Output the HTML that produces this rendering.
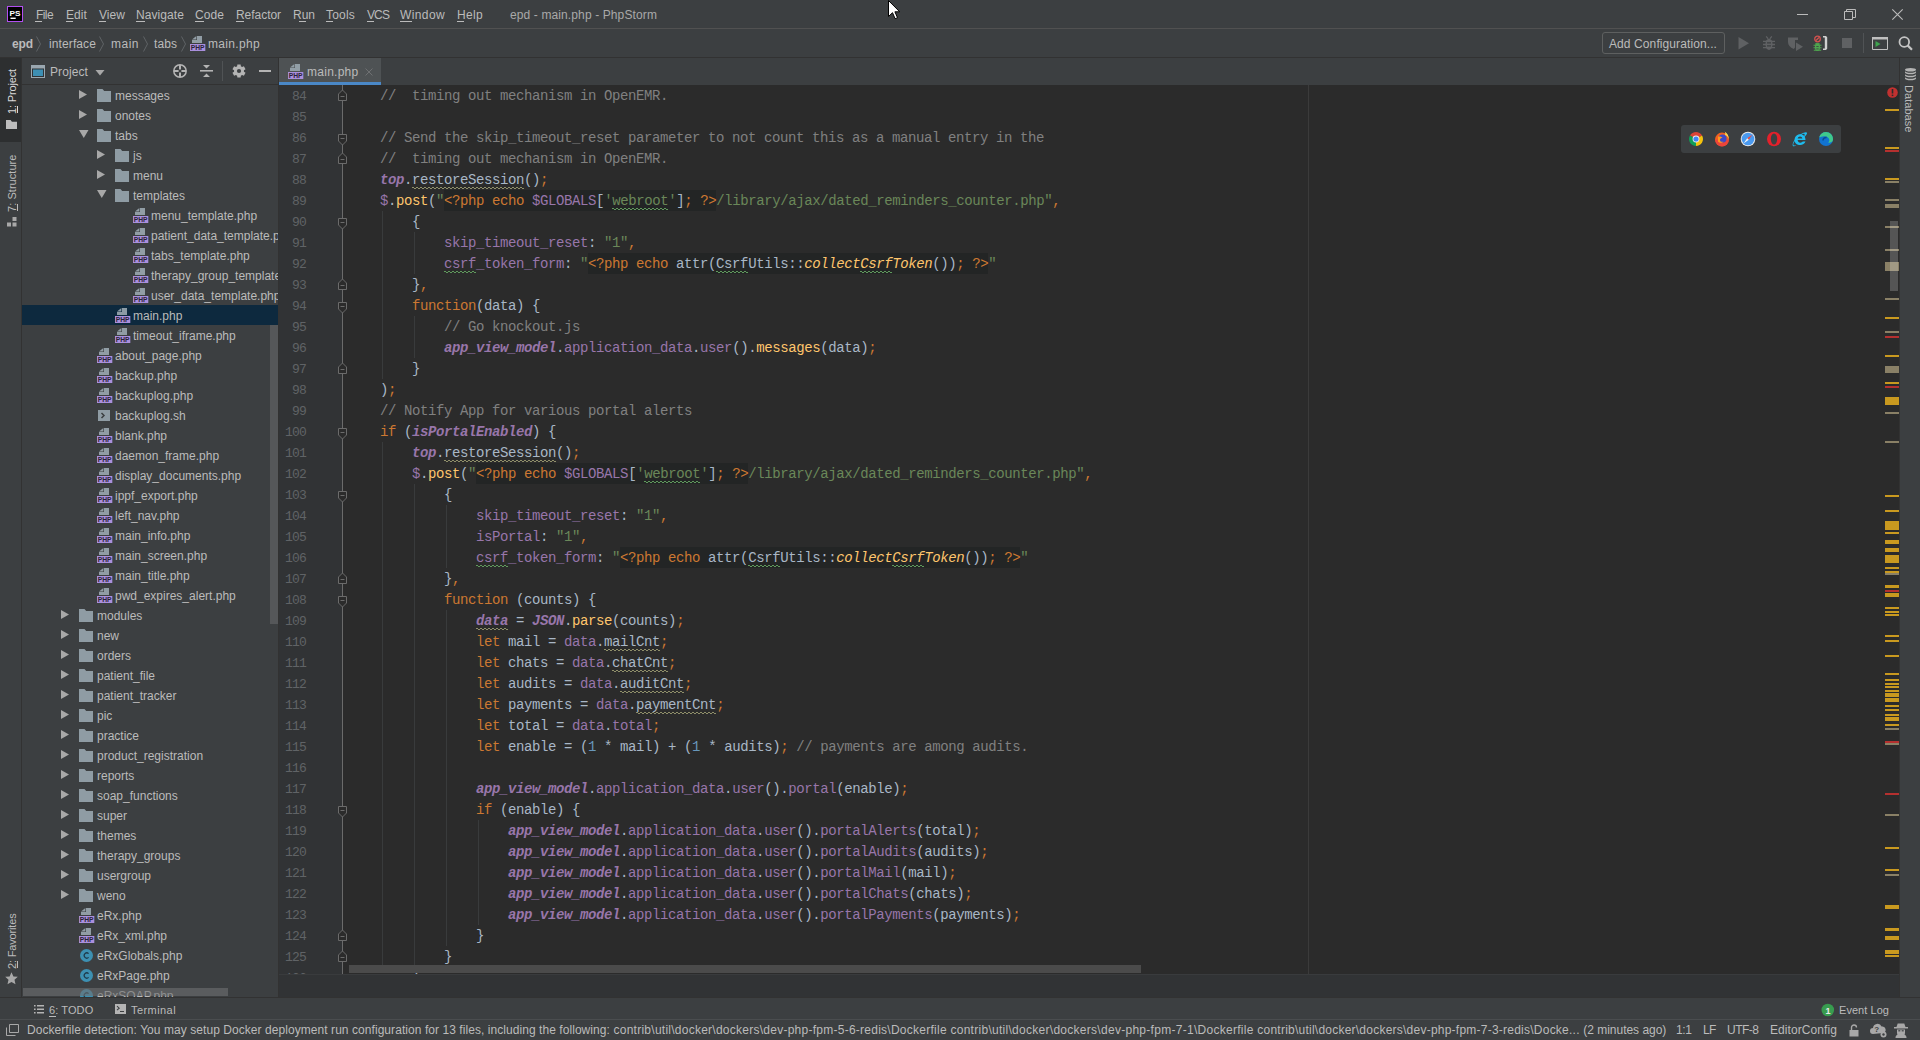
<!DOCTYPE html>
<html><head><meta charset="utf-8"><style>
*{margin:0;padding:0;box-sizing:border-box}
html,body{width:1920px;height:1040px;overflow:hidden;background:#3c3f41;font-family:"Liberation Sans",sans-serif;color:#bbbbbb;font-size:12px}
.a{position:absolute}
.ic{position:absolute;overflow:visible}
.tx{position:absolute;line-height:16px;white-space:nowrap}
.sel{position:absolute;left:22px;width:256px;height:20px;background:#0d293e}
#tree{position:absolute;left:22px;top:85px;width:256px;height:912px;overflow:hidden}
#tree .inner{position:absolute;left:-22px;top:-85px;width:1920px;height:1040px}
#editor{position:absolute;left:279px;top:85px;width:1620px;height:889px;background:#2b2b2b;overflow:hidden}
#editor .inner{position:absolute;left:-279px;top:-85px;width:1920px;height:1040px}
.gutter{position:absolute;left:279px;top:85px;width:64px;height:889px;background:#313335}
.num{position:absolute;left:279px;width:27px;text-align:right;font-family:"Liberation Mono",monospace;font-size:13px;letter-spacing:-0.8px;line-height:21px;color:#606366}
.ln{position:absolute;left:380px;font-family:"Liberation Mono",monospace;font-size:14px;letter-spacing:-0.4px;line-height:21px;color:#a9b7c6;white-space:pre}
.k{color:#cc7832} .s{color:#6a8759} .c{color:#808080} .p{color:#9876aa} .pi{color:#9876aa;font-style:italic;font-weight:bold}
.f{color:#ffc66d} .fi{color:#ffc66d;font-style:italic} .n{color:#6897bb}
.T{}
.tbg{position:absolute;height:21px;background:#232525}
.u,.ug,.sg,.pg,.fig,.piu{position:relative}
.u::after,.ug::after,.sg::after,.pg::after,.fig::after,.piu::after{content:"";position:absolute;left:0;right:0;top:14.5px;height:2px;background:repeating-linear-gradient(90deg,var(--wc) 0 2px,transparent 2px 4px) 0 0/100% 1px no-repeat,repeating-linear-gradient(90deg,transparent 0 2px,var(--wc) 2px 4px) 0 1px/100% 1px no-repeat}
.u{--wc:#8f8f6a}
.ug{--wc:#5f9a5c}
.sg{color:#6a8759;--wc:#5f9a5c}
.pg{color:#9876aa;--wc:#5f9a5c}
.fig{color:#ffc66d;font-style:italic;--wc:#5f9a5c}
.piu{color:#9876aa;font-style:italic;font-weight:bold;--wc:#8f8f6a}
.guide{position:absolute;width:1px;background:#393b3c}
.mk{position:absolute;left:1885px;width:14px}
.foldline{position:absolute;left:342px;top:85px;width:1px;height:889px;background:#6b6b6b}
</style></head><body>
<div class="a" style="left:0;top:28px;width:1920px;height:1px;background:#515151"></div>
<div class="a" style="left:0;top:57px;width:1920px;height:1px;background:#323232"></div>
<div class="a" style="left:0;top:58px;width:21px;height:84px;background:#2d2f30"></div>
<div class="a" style="left:21px;top:58px;width:1px;height:939px;background:#323232"></div>
<div class="a" style="left:1899px;top:58px;width:1px;height:939px;background:#323232"></div>
<div class="a" style="left:22px;top:84px;width:256px;height:1px;background:#323232"></div>
<div class="a" style="left:278px;top:58px;width:1px;height:939px;background:#323232"></div>
<div id="tree"><div class="inner"><svg class="ic" style="left:79px;top:90px" width="10" height="10" viewBox="0 0 10 10"><path d="M0 0v9l8-4.5z" fill="#a8a8a8"/></svg><svg class="ic" style="left:97px;top:89px" width="16" height="16" viewBox="0 0 16 16"><path d="M0 0h5.5l1.7 2H14v11H0z" fill="#8f9ca4"/></svg><div class="tx" style="left:115px;top:87.84px;font-size:12px;color:#bbbbbb;font-weight:normal;">messages</div><svg class="ic" style="left:79px;top:110px" width="10" height="10" viewBox="0 0 10 10"><path d="M0 0v9l8-4.5z" fill="#a8a8a8"/></svg><svg class="ic" style="left:97px;top:109px" width="16" height="16" viewBox="0 0 16 16"><path d="M0 0h5.5l1.7 2H14v11H0z" fill="#8f9ca4"/></svg><div class="tx" style="left:115px;top:107.84px;font-size:12px;color:#bbbbbb;font-weight:normal;">onotes</div><svg class="ic" style="left:79px;top:130px" width="10" height="10" viewBox="0 0 10 10"><path d="M0 0h9.5L4.75 8z" fill="#a8a8a8"/></svg><svg class="ic" style="left:97px;top:129px" width="16" height="16" viewBox="0 0 16 16"><path d="M0 0h5.5l1.7 2H14v11H0z" fill="#8f9ca4"/></svg><div class="tx" style="left:115px;top:127.84px;font-size:12px;color:#bbbbbb;font-weight:normal;">tabs</div><svg class="ic" style="left:97px;top:150px" width="10" height="10" viewBox="0 0 10 10"><path d="M0 0v9l8-4.5z" fill="#a8a8a8"/></svg><svg class="ic" style="left:115px;top:149px" width="16" height="16" viewBox="0 0 16 16"><path d="M0 0h5.5l1.7 2H14v11H0z" fill="#8f9ca4"/></svg><div class="tx" style="left:133px;top:147.84px;font-size:12px;color:#bbbbbb;font-weight:normal;">js</div><svg class="ic" style="left:97px;top:170px" width="10" height="10" viewBox="0 0 10 10"><path d="M0 0v9l8-4.5z" fill="#a8a8a8"/></svg><svg class="ic" style="left:115px;top:169px" width="16" height="16" viewBox="0 0 16 16"><path d="M0 0h5.5l1.7 2H14v11H0z" fill="#8f9ca4"/></svg><div class="tx" style="left:133px;top:167.84px;font-size:12px;color:#bbbbbb;font-weight:normal;">menu</div><svg class="ic" style="left:97px;top:190px" width="10" height="10" viewBox="0 0 10 10"><path d="M0 0h9.5L4.75 8z" fill="#a8a8a8"/></svg><svg class="ic" style="left:115px;top:189px" width="16" height="16" viewBox="0 0 16 16"><path d="M0 0h5.5l1.7 2H14v11H0z" fill="#8f9ca4"/></svg><div class="tx" style="left:133px;top:187.84px;font-size:12px;color:#bbbbbb;font-weight:normal;">templates</div><svg class="ic" style="left:133px;top:207px" width="16" height="16" viewBox="0 0 16 16"><path d="M7 1h5v7H2V5.1h5z" fill="#9aa7b0" fill-opacity="0.9"/><path d="M2 4.6L6.4 1v3.6z" fill="#9aa7b0" fill-opacity="0.9"/><rect x="0" y="9" width="15.3" height="7" fill="#a98fdc"/><text x="0.8" y="15.3" font-family="Liberation Sans" font-weight="bold" font-size="7.4" fill="#2a2238" textLength="13.8" lengthAdjust="spacingAndGlyphs">PHP</text></svg><div class="tx" style="left:151px;top:207.84px;font-size:12px;color:#bbbbbb;font-weight:normal;">menu_template.php</div><svg class="ic" style="left:133px;top:227px" width="16" height="16" viewBox="0 0 16 16"><path d="M7 1h5v7H2V5.1h5z" fill="#9aa7b0" fill-opacity="0.9"/><path d="M2 4.6L6.4 1v3.6z" fill="#9aa7b0" fill-opacity="0.9"/><rect x="0" y="9" width="15.3" height="7" fill="#a98fdc"/><text x="0.8" y="15.3" font-family="Liberation Sans" font-weight="bold" font-size="7.4" fill="#2a2238" textLength="13.8" lengthAdjust="spacingAndGlyphs">PHP</text></svg><div class="tx" style="left:151px;top:227.84px;font-size:12px;color:#bbbbbb;font-weight:normal;">patient_data_template.php</div><svg class="ic" style="left:133px;top:247px" width="16" height="16" viewBox="0 0 16 16"><path d="M7 1h5v7H2V5.1h5z" fill="#9aa7b0" fill-opacity="0.9"/><path d="M2 4.6L6.4 1v3.6z" fill="#9aa7b0" fill-opacity="0.9"/><rect x="0" y="9" width="15.3" height="7" fill="#a98fdc"/><text x="0.8" y="15.3" font-family="Liberation Sans" font-weight="bold" font-size="7.4" fill="#2a2238" textLength="13.8" lengthAdjust="spacingAndGlyphs">PHP</text></svg><div class="tx" style="left:151px;top:247.84px;font-size:12px;color:#bbbbbb;font-weight:normal;">tabs_template.php</div><svg class="ic" style="left:133px;top:267px" width="16" height="16" viewBox="0 0 16 16"><path d="M7 1h5v7H2V5.1h5z" fill="#9aa7b0" fill-opacity="0.9"/><path d="M2 4.6L6.4 1v3.6z" fill="#9aa7b0" fill-opacity="0.9"/><rect x="0" y="9" width="15.3" height="7" fill="#a98fdc"/><text x="0.8" y="15.3" font-family="Liberation Sans" font-weight="bold" font-size="7.4" fill="#2a2238" textLength="13.8" lengthAdjust="spacingAndGlyphs">PHP</text></svg><div class="tx" style="left:151px;top:267.84px;font-size:12px;color:#bbbbbb;font-weight:normal;">therapy_group_template.php</div><svg class="ic" style="left:133px;top:287px" width="16" height="16" viewBox="0 0 16 16"><path d="M7 1h5v7H2V5.1h5z" fill="#9aa7b0" fill-opacity="0.9"/><path d="M2 4.6L6.4 1v3.6z" fill="#9aa7b0" fill-opacity="0.9"/><rect x="0" y="9" width="15.3" height="7" fill="#a98fdc"/><text x="0.8" y="15.3" font-family="Liberation Sans" font-weight="bold" font-size="7.4" fill="#2a2238" textLength="13.8" lengthAdjust="spacingAndGlyphs">PHP</text></svg><div class="tx" style="left:151px;top:287.84px;font-size:12px;color:#bbbbbb;font-weight:normal;">user_data_template.php</div><div class="sel" style="top:305px"></div><svg class="ic" style="left:115px;top:307px" width="16" height="16" viewBox="0 0 16 16"><path d="M7 1h5v7H2V5.1h5z" fill="#9aa7b0" fill-opacity="0.9"/><path d="M2 4.6L6.4 1v3.6z" fill="#9aa7b0" fill-opacity="0.9"/><rect x="0" y="9" width="15.3" height="7" fill="#a98fdc"/><text x="0.8" y="15.3" font-family="Liberation Sans" font-weight="bold" font-size="7.4" fill="#2a2238" textLength="13.8" lengthAdjust="spacingAndGlyphs">PHP</text></svg><div class="tx" style="left:133px;top:307.84px;font-size:12px;color:#bbbbbb;font-weight:normal;">main.php</div><svg class="ic" style="left:115px;top:327px" width="16" height="16" viewBox="0 0 16 16"><path d="M7 1h5v7H2V5.1h5z" fill="#9aa7b0" fill-opacity="0.9"/><path d="M2 4.6L6.4 1v3.6z" fill="#9aa7b0" fill-opacity="0.9"/><rect x="0" y="9" width="15.3" height="7" fill="#a98fdc"/><text x="0.8" y="15.3" font-family="Liberation Sans" font-weight="bold" font-size="7.4" fill="#2a2238" textLength="13.8" lengthAdjust="spacingAndGlyphs">PHP</text></svg><div class="tx" style="left:133px;top:327.84px;font-size:12px;color:#bbbbbb;font-weight:normal;">timeout_iframe.php</div><svg class="ic" style="left:97px;top:347px" width="16" height="16" viewBox="0 0 16 16"><path d="M7 1h5v7H2V5.1h5z" fill="#9aa7b0" fill-opacity="0.9"/><path d="M2 4.6L6.4 1v3.6z" fill="#9aa7b0" fill-opacity="0.9"/><rect x="0" y="9" width="15.3" height="7" fill="#a98fdc"/><text x="0.8" y="15.3" font-family="Liberation Sans" font-weight="bold" font-size="7.4" fill="#2a2238" textLength="13.8" lengthAdjust="spacingAndGlyphs">PHP</text></svg><div class="tx" style="left:115px;top:347.84px;font-size:12px;color:#bbbbbb;font-weight:normal;">about_page.php</div><svg class="ic" style="left:97px;top:367px" width="16" height="16" viewBox="0 0 16 16"><path d="M7 1h5v7H2V5.1h5z" fill="#9aa7b0" fill-opacity="0.9"/><path d="M2 4.6L6.4 1v3.6z" fill="#9aa7b0" fill-opacity="0.9"/><rect x="0" y="9" width="15.3" height="7" fill="#a98fdc"/><text x="0.8" y="15.3" font-family="Liberation Sans" font-weight="bold" font-size="7.4" fill="#2a2238" textLength="13.8" lengthAdjust="spacingAndGlyphs">PHP</text></svg><div class="tx" style="left:115px;top:367.84px;font-size:12px;color:#bbbbbb;font-weight:normal;">backup.php</div><svg class="ic" style="left:97px;top:387px" width="16" height="16" viewBox="0 0 16 16"><path d="M7 1h5v7H2V5.1h5z" fill="#9aa7b0" fill-opacity="0.9"/><path d="M2 4.6L6.4 1v3.6z" fill="#9aa7b0" fill-opacity="0.9"/><rect x="0" y="9" width="15.3" height="7" fill="#a98fdc"/><text x="0.8" y="15.3" font-family="Liberation Sans" font-weight="bold" font-size="7.4" fill="#2a2238" textLength="13.8" lengthAdjust="spacingAndGlyphs">PHP</text></svg><div class="tx" style="left:115px;top:387.84px;font-size:12px;color:#bbbbbb;font-weight:normal;">backuplog.php</div><svg class="ic" style="left:97px;top:407px" width="16" height="16" viewBox="0 0 16 16"><rect x="1" y="3" width="12" height="11" fill="#8f9ca4"/><path d="M4.5 6l2.5 2.5-2.5 2.5" stroke="#3c3f41" stroke-width="1.5" fill="none"/></svg><div class="tx" style="left:115px;top:407.84px;font-size:12px;color:#bbbbbb;font-weight:normal;">backuplog.sh</div><svg class="ic" style="left:97px;top:427px" width="16" height="16" viewBox="0 0 16 16"><path d="M7 1h5v7H2V5.1h5z" fill="#9aa7b0" fill-opacity="0.9"/><path d="M2 4.6L6.4 1v3.6z" fill="#9aa7b0" fill-opacity="0.9"/><rect x="0" y="9" width="15.3" height="7" fill="#a98fdc"/><text x="0.8" y="15.3" font-family="Liberation Sans" font-weight="bold" font-size="7.4" fill="#2a2238" textLength="13.8" lengthAdjust="spacingAndGlyphs">PHP</text></svg><div class="tx" style="left:115px;top:427.84px;font-size:12px;color:#bbbbbb;font-weight:normal;">blank.php</div><svg class="ic" style="left:97px;top:447px" width="16" height="16" viewBox="0 0 16 16"><path d="M7 1h5v7H2V5.1h5z" fill="#9aa7b0" fill-opacity="0.9"/><path d="M2 4.6L6.4 1v3.6z" fill="#9aa7b0" fill-opacity="0.9"/><rect x="0" y="9" width="15.3" height="7" fill="#a98fdc"/><text x="0.8" y="15.3" font-family="Liberation Sans" font-weight="bold" font-size="7.4" fill="#2a2238" textLength="13.8" lengthAdjust="spacingAndGlyphs">PHP</text></svg><div class="tx" style="left:115px;top:447.84px;font-size:12px;color:#bbbbbb;font-weight:normal;">daemon_frame.php</div><svg class="ic" style="left:97px;top:467px" width="16" height="16" viewBox="0 0 16 16"><path d="M7 1h5v7H2V5.1h5z" fill="#9aa7b0" fill-opacity="0.9"/><path d="M2 4.6L6.4 1v3.6z" fill="#9aa7b0" fill-opacity="0.9"/><rect x="0" y="9" width="15.3" height="7" fill="#a98fdc"/><text x="0.8" y="15.3" font-family="Liberation Sans" font-weight="bold" font-size="7.4" fill="#2a2238" textLength="13.8" lengthAdjust="spacingAndGlyphs">PHP</text></svg><div class="tx" style="left:115px;top:467.84px;font-size:12px;color:#bbbbbb;font-weight:normal;">display_documents.php</div><svg class="ic" style="left:97px;top:487px" width="16" height="16" viewBox="0 0 16 16"><path d="M7 1h5v7H2V5.1h5z" fill="#9aa7b0" fill-opacity="0.9"/><path d="M2 4.6L6.4 1v3.6z" fill="#9aa7b0" fill-opacity="0.9"/><rect x="0" y="9" width="15.3" height="7" fill="#a98fdc"/><text x="0.8" y="15.3" font-family="Liberation Sans" font-weight="bold" font-size="7.4" fill="#2a2238" textLength="13.8" lengthAdjust="spacingAndGlyphs">PHP</text></svg><div class="tx" style="left:115px;top:487.84px;font-size:12px;color:#bbbbbb;font-weight:normal;">ippf_export.php</div><svg class="ic" style="left:97px;top:507px" width="16" height="16" viewBox="0 0 16 16"><path d="M7 1h5v7H2V5.1h5z" fill="#9aa7b0" fill-opacity="0.9"/><path d="M2 4.6L6.4 1v3.6z" fill="#9aa7b0" fill-opacity="0.9"/><rect x="0" y="9" width="15.3" height="7" fill="#a98fdc"/><text x="0.8" y="15.3" font-family="Liberation Sans" font-weight="bold" font-size="7.4" fill="#2a2238" textLength="13.8" lengthAdjust="spacingAndGlyphs">PHP</text></svg><div class="tx" style="left:115px;top:507.84px;font-size:12px;color:#bbbbbb;font-weight:normal;">left_nav.php</div><svg class="ic" style="left:97px;top:527px" width="16" height="16" viewBox="0 0 16 16"><path d="M7 1h5v7H2V5.1h5z" fill="#9aa7b0" fill-opacity="0.9"/><path d="M2 4.6L6.4 1v3.6z" fill="#9aa7b0" fill-opacity="0.9"/><rect x="0" y="9" width="15.3" height="7" fill="#a98fdc"/><text x="0.8" y="15.3" font-family="Liberation Sans" font-weight="bold" font-size="7.4" fill="#2a2238" textLength="13.8" lengthAdjust="spacingAndGlyphs">PHP</text></svg><div class="tx" style="left:115px;top:527.84px;font-size:12px;color:#bbbbbb;font-weight:normal;">main_info.php</div><svg class="ic" style="left:97px;top:547px" width="16" height="16" viewBox="0 0 16 16"><path d="M7 1h5v7H2V5.1h5z" fill="#9aa7b0" fill-opacity="0.9"/><path d="M2 4.6L6.4 1v3.6z" fill="#9aa7b0" fill-opacity="0.9"/><rect x="0" y="9" width="15.3" height="7" fill="#a98fdc"/><text x="0.8" y="15.3" font-family="Liberation Sans" font-weight="bold" font-size="7.4" fill="#2a2238" textLength="13.8" lengthAdjust="spacingAndGlyphs">PHP</text></svg><div class="tx" style="left:115px;top:547.84px;font-size:12px;color:#bbbbbb;font-weight:normal;">main_screen.php</div><svg class="ic" style="left:97px;top:567px" width="16" height="16" viewBox="0 0 16 16"><path d="M7 1h5v7H2V5.1h5z" fill="#9aa7b0" fill-opacity="0.9"/><path d="M2 4.6L6.4 1v3.6z" fill="#9aa7b0" fill-opacity="0.9"/><rect x="0" y="9" width="15.3" height="7" fill="#a98fdc"/><text x="0.8" y="15.3" font-family="Liberation Sans" font-weight="bold" font-size="7.4" fill="#2a2238" textLength="13.8" lengthAdjust="spacingAndGlyphs">PHP</text></svg><div class="tx" style="left:115px;top:567.84px;font-size:12px;color:#bbbbbb;font-weight:normal;">main_title.php</div><svg class="ic" style="left:97px;top:587px" width="16" height="16" viewBox="0 0 16 16"><path d="M7 1h5v7H2V5.1h5z" fill="#9aa7b0" fill-opacity="0.9"/><path d="M2 4.6L6.4 1v3.6z" fill="#9aa7b0" fill-opacity="0.9"/><rect x="0" y="9" width="15.3" height="7" fill="#a98fdc"/><text x="0.8" y="15.3" font-family="Liberation Sans" font-weight="bold" font-size="7.4" fill="#2a2238" textLength="13.8" lengthAdjust="spacingAndGlyphs">PHP</text></svg><div class="tx" style="left:115px;top:587.84px;font-size:12px;color:#bbbbbb;font-weight:normal;">pwd_expires_alert.php</div><svg class="ic" style="left:61px;top:610px" width="10" height="10" viewBox="0 0 10 10"><path d="M0 0v9l8-4.5z" fill="#a8a8a8"/></svg><svg class="ic" style="left:79px;top:609px" width="16" height="16" viewBox="0 0 16 16"><path d="M0 0h5.5l1.7 2H14v11H0z" fill="#8f9ca4"/></svg><div class="tx" style="left:97px;top:607.84px;font-size:12px;color:#bbbbbb;font-weight:normal;">modules</div><svg class="ic" style="left:61px;top:630px" width="10" height="10" viewBox="0 0 10 10"><path d="M0 0v9l8-4.5z" fill="#a8a8a8"/></svg><svg class="ic" style="left:79px;top:629px" width="16" height="16" viewBox="0 0 16 16"><path d="M0 0h5.5l1.7 2H14v11H0z" fill="#8f9ca4"/></svg><div class="tx" style="left:97px;top:627.84px;font-size:12px;color:#bbbbbb;font-weight:normal;">new</div><svg class="ic" style="left:61px;top:650px" width="10" height="10" viewBox="0 0 10 10"><path d="M0 0v9l8-4.5z" fill="#a8a8a8"/></svg><svg class="ic" style="left:79px;top:649px" width="16" height="16" viewBox="0 0 16 16"><path d="M0 0h5.5l1.7 2H14v11H0z" fill="#8f9ca4"/></svg><div class="tx" style="left:97px;top:647.84px;font-size:12px;color:#bbbbbb;font-weight:normal;">orders</div><svg class="ic" style="left:61px;top:670px" width="10" height="10" viewBox="0 0 10 10"><path d="M0 0v9l8-4.5z" fill="#a8a8a8"/></svg><svg class="ic" style="left:79px;top:669px" width="16" height="16" viewBox="0 0 16 16"><path d="M0 0h5.5l1.7 2H14v11H0z" fill="#8f9ca4"/></svg><div class="tx" style="left:97px;top:667.84px;font-size:12px;color:#bbbbbb;font-weight:normal;">patient_file</div><svg class="ic" style="left:61px;top:690px" width="10" height="10" viewBox="0 0 10 10"><path d="M0 0v9l8-4.5z" fill="#a8a8a8"/></svg><svg class="ic" style="left:79px;top:689px" width="16" height="16" viewBox="0 0 16 16"><path d="M0 0h5.5l1.7 2H14v11H0z" fill="#8f9ca4"/></svg><div class="tx" style="left:97px;top:687.84px;font-size:12px;color:#bbbbbb;font-weight:normal;">patient_tracker</div><svg class="ic" style="left:61px;top:710px" width="10" height="10" viewBox="0 0 10 10"><path d="M0 0v9l8-4.5z" fill="#a8a8a8"/></svg><svg class="ic" style="left:79px;top:709px" width="16" height="16" viewBox="0 0 16 16"><path d="M0 0h5.5l1.7 2H14v11H0z" fill="#8f9ca4"/></svg><div class="tx" style="left:97px;top:707.84px;font-size:12px;color:#bbbbbb;font-weight:normal;">pic</div><svg class="ic" style="left:61px;top:730px" width="10" height="10" viewBox="0 0 10 10"><path d="M0 0v9l8-4.5z" fill="#a8a8a8"/></svg><svg class="ic" style="left:79px;top:729px" width="16" height="16" viewBox="0 0 16 16"><path d="M0 0h5.5l1.7 2H14v11H0z" fill="#8f9ca4"/></svg><div class="tx" style="left:97px;top:727.84px;font-size:12px;color:#bbbbbb;font-weight:normal;">practice</div><svg class="ic" style="left:61px;top:750px" width="10" height="10" viewBox="0 0 10 10"><path d="M0 0v9l8-4.5z" fill="#a8a8a8"/></svg><svg class="ic" style="left:79px;top:749px" width="16" height="16" viewBox="0 0 16 16"><path d="M0 0h5.5l1.7 2H14v11H0z" fill="#8f9ca4"/></svg><div class="tx" style="left:97px;top:747.84px;font-size:12px;color:#bbbbbb;font-weight:normal;">product_registration</div><svg class="ic" style="left:61px;top:770px" width="10" height="10" viewBox="0 0 10 10"><path d="M0 0v9l8-4.5z" fill="#a8a8a8"/></svg><svg class="ic" style="left:79px;top:769px" width="16" height="16" viewBox="0 0 16 16"><path d="M0 0h5.5l1.7 2H14v11H0z" fill="#8f9ca4"/></svg><div class="tx" style="left:97px;top:767.84px;font-size:12px;color:#bbbbbb;font-weight:normal;">reports</div><svg class="ic" style="left:61px;top:790px" width="10" height="10" viewBox="0 0 10 10"><path d="M0 0v9l8-4.5z" fill="#a8a8a8"/></svg><svg class="ic" style="left:79px;top:789px" width="16" height="16" viewBox="0 0 16 16"><path d="M0 0h5.5l1.7 2H14v11H0z" fill="#8f9ca4"/></svg><div class="tx" style="left:97px;top:787.84px;font-size:12px;color:#bbbbbb;font-weight:normal;">soap_functions</div><svg class="ic" style="left:61px;top:810px" width="10" height="10" viewBox="0 0 10 10"><path d="M0 0v9l8-4.5z" fill="#a8a8a8"/></svg><svg class="ic" style="left:79px;top:809px" width="16" height="16" viewBox="0 0 16 16"><path d="M0 0h5.5l1.7 2H14v11H0z" fill="#8f9ca4"/></svg><div class="tx" style="left:97px;top:807.84px;font-size:12px;color:#bbbbbb;font-weight:normal;">super</div><svg class="ic" style="left:61px;top:830px" width="10" height="10" viewBox="0 0 10 10"><path d="M0 0v9l8-4.5z" fill="#a8a8a8"/></svg><svg class="ic" style="left:79px;top:829px" width="16" height="16" viewBox="0 0 16 16"><path d="M0 0h5.5l1.7 2H14v11H0z" fill="#8f9ca4"/></svg><div class="tx" style="left:97px;top:827.84px;font-size:12px;color:#bbbbbb;font-weight:normal;">themes</div><svg class="ic" style="left:61px;top:850px" width="10" height="10" viewBox="0 0 10 10"><path d="M0 0v9l8-4.5z" fill="#a8a8a8"/></svg><svg class="ic" style="left:79px;top:849px" width="16" height="16" viewBox="0 0 16 16"><path d="M0 0h5.5l1.7 2H14v11H0z" fill="#8f9ca4"/></svg><div class="tx" style="left:97px;top:847.84px;font-size:12px;color:#bbbbbb;font-weight:normal;">therapy_groups</div><svg class="ic" style="left:61px;top:870px" width="10" height="10" viewBox="0 0 10 10"><path d="M0 0v9l8-4.5z" fill="#a8a8a8"/></svg><svg class="ic" style="left:79px;top:869px" width="16" height="16" viewBox="0 0 16 16"><path d="M0 0h5.5l1.7 2H14v11H0z" fill="#8f9ca4"/></svg><div class="tx" style="left:97px;top:867.84px;font-size:12px;color:#bbbbbb;font-weight:normal;">usergroup</div><svg class="ic" style="left:61px;top:890px" width="10" height="10" viewBox="0 0 10 10"><path d="M0 0v9l8-4.5z" fill="#a8a8a8"/></svg><svg class="ic" style="left:79px;top:889px" width="16" height="16" viewBox="0 0 16 16"><path d="M0 0h5.5l1.7 2H14v11H0z" fill="#8f9ca4"/></svg><div class="tx" style="left:97px;top:887.84px;font-size:12px;color:#bbbbbb;font-weight:normal;">weno</div><svg class="ic" style="left:79px;top:907px" width="16" height="16" viewBox="0 0 16 16"><path d="M7 1h5v7H2V5.1h5z" fill="#9aa7b0" fill-opacity="0.9"/><path d="M2 4.6L6.4 1v3.6z" fill="#9aa7b0" fill-opacity="0.9"/><rect x="0" y="9" width="15.3" height="7" fill="#a98fdc"/><text x="0.8" y="15.3" font-family="Liberation Sans" font-weight="bold" font-size="7.4" fill="#2a2238" textLength="13.8" lengthAdjust="spacingAndGlyphs">PHP</text></svg><div class="tx" style="left:97px;top:907.84px;font-size:12px;color:#bbbbbb;font-weight:normal;">eRx.php</div><svg class="ic" style="left:79px;top:927px" width="16" height="16" viewBox="0 0 16 16"><path d="M7 1h5v7H2V5.1h5z" fill="#9aa7b0" fill-opacity="0.9"/><path d="M2 4.6L6.4 1v3.6z" fill="#9aa7b0" fill-opacity="0.9"/><rect x="0" y="9" width="15.3" height="7" fill="#a98fdc"/><text x="0.8" y="15.3" font-family="Liberation Sans" font-weight="bold" font-size="7.4" fill="#2a2238" textLength="13.8" lengthAdjust="spacingAndGlyphs">PHP</text></svg><div class="tx" style="left:97px;top:927.84px;font-size:12px;color:#bbbbbb;font-weight:normal;">eRx_xml.php</div><svg class="ic" style="left:79px;top:947px" width="16" height="16" viewBox="0 0 16 16"><circle cx="7.5" cy="8.5" r="6.5" fill="#3d90b2"/><path d="M9.6 6.6A2.6 2.6 0 1 0 9.6 10.4" stroke="#1e3a4a" stroke-width="1.2" fill="none"/></svg><div class="tx" style="left:97px;top:947.84px;font-size:12px;color:#bbbbbb;font-weight:normal;">eRxGlobals.php</div><svg class="ic" style="left:79px;top:967px" width="16" height="16" viewBox="0 0 16 16"><circle cx="7.5" cy="8.5" r="6.5" fill="#3d90b2"/><path d="M9.6 6.6A2.6 2.6 0 1 0 9.6 10.4" stroke="#1e3a4a" stroke-width="1.2" fill="none"/></svg><div class="tx" style="left:97px;top:967.84px;font-size:12px;color:#bbbbbb;font-weight:normal;">eRxPage.php</div><svg class="ic" style="left:79px;top:987px" width="16" height="16" viewBox="0 0 16 16"><circle cx="7.5" cy="8.5" r="6.5" fill="#3d90b2"/><path d="M9.6 6.6A2.6 2.6 0 1 0 9.6 10.4" stroke="#1e3a4a" stroke-width="1.2" fill="none"/></svg><div class="tx" style="left:97px;top:987.84px;font-size:12px;color:#bbbbbb;font-weight:normal;">eRxSOAP.php</div>
<div class="a" style="left:270px;top:325px;width:8px;height:299px;background:rgba(110,112,114,0.5)"></div>
<div class="a" style="left:23px;top:988px;width:205px;height:8px;background:rgba(110,112,114,0.6)"></div>
</div></div>
<div class="a" style="left:279px;top:58px;width:102px;height:24px;background:#4e5254"></div>
<div class="a" style="left:279px;top:82px;width:102px;height:3px;background:#4a88c7"></div>
<svg class="ic" style="left:288px;top:63px" width="16" height="16" viewBox="0 0 16 16"><path d="M7 1h5v7H2V5.1h5z" fill="#9aa7b0" fill-opacity="0.9"/><path d="M2 4.6L6.4 1v3.6z" fill="#9aa7b0" fill-opacity="0.9"/><rect x="0" y="9" width="15.3" height="7" fill="#a98fdc"/><text x="0.8" y="15.3" font-family="Liberation Sans" font-weight="bold" font-size="7.4" fill="#2a2238" textLength="13.8" lengthAdjust="spacingAndGlyphs">PHP</text></svg>
<svg class="ic" style="left:190px;top:35px" width="16" height="16" viewBox="0 0 16 16"><path d="M7 1h5v7H2V5.1h5z" fill="#9aa7b0" fill-opacity="0.9"/><path d="M2 4.6L6.4 1v3.6z" fill="#9aa7b0" fill-opacity="0.9"/><rect x="0" y="9" width="15.3" height="7" fill="#a98fdc"/><text x="0.8" y="15.3" font-family="Liberation Sans" font-weight="bold" font-size="7.4" fill="#2a2238" textLength="13.8" lengthAdjust="spacingAndGlyphs">PHP</text></svg>
<div id="editor"><div class="inner">
<div class="gutter"></div>
<div class="num" style="top:86px">84</div><div class="num" style="top:107px">85</div><div class="num" style="top:128px">86</div><div class="num" style="top:149px">87</div><div class="num" style="top:170px">88</div><div class="num" style="top:191px">89</div><div class="num" style="top:212px">90</div><div class="num" style="top:233px">91</div><div class="num" style="top:254px">92</div><div class="num" style="top:275px">93</div><div class="num" style="top:296px">94</div><div class="num" style="top:317px">95</div><div class="num" style="top:338px">96</div><div class="num" style="top:359px">97</div><div class="num" style="top:380px">98</div><div class="num" style="top:401px">99</div><div class="num" style="top:422px">100</div><div class="num" style="top:443px">101</div><div class="num" style="top:464px">102</div><div class="num" style="top:485px">103</div><div class="num" style="top:506px">104</div><div class="num" style="top:527px">105</div><div class="num" style="top:548px">106</div><div class="num" style="top:569px">107</div><div class="num" style="top:590px">108</div><div class="num" style="top:611px">109</div><div class="num" style="top:632px">110</div><div class="num" style="top:653px">111</div><div class="num" style="top:674px">112</div><div class="num" style="top:695px">113</div><div class="num" style="top:716px">114</div><div class="num" style="top:737px">115</div><div class="num" style="top:758px">116</div><div class="num" style="top:779px">117</div><div class="num" style="top:800px">118</div><div class="num" style="top:821px">119</div><div class="num" style="top:842px">120</div><div class="num" style="top:863px">121</div><div class="num" style="top:884px">122</div><div class="num" style="top:905px">123</div><div class="num" style="top:926px">124</div><div class="num" style="top:947px">125</div><div class="num" style="top:968px">126</div>
<div class="guide" style="left:382px;top:211px;height:168px"></div><div class="guide" style="left:414px;top:232px;height:42px"></div><div class="guide" style="left:414px;top:316px;height:42px"></div><div class="guide" style="left:382px;top:442px;height:525px"></div><div class="guide" style="left:414px;top:484px;height:483px"></div><div class="guide" style="left:446px;top:505px;height:63px"></div><div class="guide" style="left:446px;top:610px;height:336px"></div><div class="guide" style="left:478px;top:820px;height:105px"></div>
<div class="foldline"></div>
<svg class="ic" style="left:338px;top:89px" width="9" height="12" viewBox="0 0 9 12"><path d="M0.5 11.5h8v-6.5l-4-4l-4 4z" fill="#2b2b2b" stroke="#6b6b6b"/><path d="M2.5 7.5h4" stroke="#6b6b6b"/></svg><svg class="ic" style="left:338px;top:134px" width="9" height="12" viewBox="0 0 9 12"><path d="M0.5 0.5h8v6.5l-4 4l-4-4z" fill="#2b2b2b" stroke="#6b6b6b"/><path d="M2.5 4.5h4" stroke="#6b6b6b"/></svg><svg class="ic" style="left:338px;top:152px" width="9" height="12" viewBox="0 0 9 12"><path d="M0.5 11.5h8v-6.5l-4-4l-4 4z" fill="#2b2b2b" stroke="#6b6b6b"/><path d="M2.5 7.5h4" stroke="#6b6b6b"/></svg><svg class="ic" style="left:338px;top:218px" width="9" height="12" viewBox="0 0 9 12"><path d="M0.5 0.5h8v6.5l-4 4l-4-4z" fill="#2b2b2b" stroke="#6b6b6b"/><path d="M2.5 4.5h4" stroke="#6b6b6b"/></svg><svg class="ic" style="left:338px;top:278px" width="9" height="12" viewBox="0 0 9 12"><path d="M0.5 11.5h8v-6.5l-4-4l-4 4z" fill="#2b2b2b" stroke="#6b6b6b"/><path d="M2.5 7.5h4" stroke="#6b6b6b"/></svg><svg class="ic" style="left:338px;top:302px" width="9" height="12" viewBox="0 0 9 12"><path d="M0.5 0.5h8v6.5l-4 4l-4-4z" fill="#2b2b2b" stroke="#6b6b6b"/><path d="M2.5 4.5h4" stroke="#6b6b6b"/></svg><svg class="ic" style="left:338px;top:362px" width="9" height="12" viewBox="0 0 9 12"><path d="M0.5 11.5h8v-6.5l-4-4l-4 4z" fill="#2b2b2b" stroke="#6b6b6b"/><path d="M2.5 7.5h4" stroke="#6b6b6b"/></svg><svg class="ic" style="left:338px;top:428px" width="9" height="12" viewBox="0 0 9 12"><path d="M0.5 0.5h8v6.5l-4 4l-4-4z" fill="#2b2b2b" stroke="#6b6b6b"/><path d="M2.5 4.5h4" stroke="#6b6b6b"/></svg><svg class="ic" style="left:338px;top:491px" width="9" height="12" viewBox="0 0 9 12"><path d="M0.5 0.5h8v6.5l-4 4l-4-4z" fill="#2b2b2b" stroke="#6b6b6b"/><path d="M2.5 4.5h4" stroke="#6b6b6b"/></svg><svg class="ic" style="left:338px;top:572px" width="9" height="12" viewBox="0 0 9 12"><path d="M0.5 11.5h8v-6.5l-4-4l-4 4z" fill="#2b2b2b" stroke="#6b6b6b"/><path d="M2.5 7.5h4" stroke="#6b6b6b"/></svg><svg class="ic" style="left:338px;top:596px" width="9" height="12" viewBox="0 0 9 12"><path d="M0.5 0.5h8v6.5l-4 4l-4-4z" fill="#2b2b2b" stroke="#6b6b6b"/><path d="M2.5 4.5h4" stroke="#6b6b6b"/></svg><svg class="ic" style="left:338px;top:806px" width="9" height="12" viewBox="0 0 9 12"><path d="M0.5 0.5h8v6.5l-4 4l-4-4z" fill="#2b2b2b" stroke="#6b6b6b"/><path d="M2.5 4.5h4" stroke="#6b6b6b"/></svg><svg class="ic" style="left:338px;top:929px" width="9" height="12" viewBox="0 0 9 12"><path d="M0.5 11.5h8v-6.5l-4-4l-4 4z" fill="#2b2b2b" stroke="#6b6b6b"/><path d="M2.5 7.5h4" stroke="#6b6b6b"/></svg><svg class="ic" style="left:338px;top:950px" width="9" height="12" viewBox="0 0 9 12"><path d="M0.5 11.5h8v-6.5l-4-4l-4 4z" fill="#2b2b2b" stroke="#6b6b6b"/><path d="M2.5 7.5h4" stroke="#6b6b6b"/></svg>
<div class="a" style="left:1308px;top:85px;width:1px;height:889px;background:#3b3b3b"></div>
<div class="tbg" style="left:444px;top:190px;width:272px"></div><div class="tbg" style="left:588px;top:253px;width:400px"></div><div class="tbg" style="left:476px;top:463px;width:272px"></div><div class="tbg" style="left:620px;top:547px;width:400px"></div>
<div class="ln" style="top:86px"><span class="c">//  timing out mechanism in OpenEMR.</span></div><div class="ln" style="top:107px"></div><div class="ln" style="top:128px"><span class="c">// Send the skip_timeout_reset parameter to not count this as a manual entry in the</span></div><div class="ln" style="top:149px"><span class="c">//  timing out mechanism in OpenEMR.</span></div><div class="ln" style="top:170px"><span class="pi">top</span>.<span class="u">restoreSession</span>()<span class="k">;</span></div><div class="ln" style="top:191px"><span class="p">$</span>.<span class="f">post</span>(<span class="s">"</span><span class="T"><span class="k">&lt;?php echo </span><span class="p">$GLOBALS</span>[<span class="s">'</span><span class="sg">webroot</span><span class="s">'</span>]<span class="k">; ?&gt;</span></span><span class="s">/library/ajax/dated_reminders_counter.php"</span><span class="k">,</span></div><div class="ln" style="top:212px">    {</div><div class="ln" style="top:233px">        <span class="p">skip_timeout_reset</span>: <span class="s">"1"</span><span class="k">,</span></div><div class="ln" style="top:254px">        <span class="pg">csrf</span><span class="p">_token_form</span>: <span class="s">"</span><span class="T"><span class="k">&lt;?php echo </span>attr(<span class="ug">Csrf</span>Utils::<span class="fi">collect</span><span class="fig">Csrf</span><span class="fi">Token</span>())<span class="k">; ?&gt;</span></span><span class="s">"</span></div><div class="ln" style="top:275px">    }<span class="k">,</span></div><div class="ln" style="top:296px">    <span class="k">function</span>(data) {</div><div class="ln" style="top:317px">        <span class="c">// Go knockout.js</span></div><div class="ln" style="top:338px">        <span class="pi">app_view_model</span>.<span class="p">application_data</span>.<span class="p">user</span>().<span class="f">messages</span>(data)<span class="k">;</span></div><div class="ln" style="top:359px">    }</div><div class="ln" style="top:380px">)<span class="k">;</span></div><div class="ln" style="top:401px"><span class="c">// Notify App for various portal alerts</span></div><div class="ln" style="top:422px"><span class="k">if</span> (<span class="pi">isPortalEnabled</span>) {</div><div class="ln" style="top:443px">    <span class="pi">top</span>.<span class="u">restoreSession</span>()<span class="k">;</span></div><div class="ln" style="top:464px">    <span class="p">$</span>.<span class="f">post</span>(<span class="s">"</span><span class="T"><span class="k">&lt;?php echo </span><span class="p">$GLOBALS</span>[<span class="s">'</span><span class="sg">webroot</span><span class="s">'</span>]<span class="k">; ?&gt;</span></span><span class="s">/library/ajax/dated_reminders_counter.php"</span><span class="k">,</span></div><div class="ln" style="top:485px">        {</div><div class="ln" style="top:506px">            <span class="p">skip_timeout_reset</span>: <span class="s">"1"</span><span class="k">,</span></div><div class="ln" style="top:527px">            <span class="p">isPortal</span>: <span class="s">"1"</span><span class="k">,</span></div><div class="ln" style="top:548px">            <span class="pg">csrf</span><span class="p">_token_form</span>: <span class="s">"</span><span class="T"><span class="k">&lt;?php echo </span>attr(<span class="ug">Csrf</span>Utils::<span class="fi">collect</span><span class="fig">Csrf</span><span class="fi">Token</span>())<span class="k">; ?&gt;</span></span><span class="s">"</span></div><div class="ln" style="top:569px">        }<span class="k">,</span></div><div class="ln" style="top:590px">        <span class="k">function</span> (counts) {</div><div class="ln" style="top:611px">            <span class="piu">data</span> = <span class="pi">JSON</span>.<span class="f">parse</span>(counts)<span class="k">;</span></div><div class="ln" style="top:632px">            <span class="k">let</span> mail = <span class="p">data</span>.<span class="u">mailCnt</span><span class="k">;</span></div><div class="ln" style="top:653px">            <span class="k">let</span> chats = <span class="p">data</span>.<span class="u">chatCnt</span><span class="k">;</span></div><div class="ln" style="top:674px">            <span class="k">let</span> audits = <span class="p">data</span>.<span class="u">auditCnt</span><span class="k">;</span></div><div class="ln" style="top:695px">            <span class="k">let</span> payments = <span class="p">data</span>.<span class="u">paymentCnt</span><span class="k">;</span></div><div class="ln" style="top:716px">            <span class="k">let</span> total = <span class="p">data</span>.<span class="p">total</span><span class="k">;</span></div><div class="ln" style="top:737px">            <span class="k">let</span> enable = (<span class="n">1</span> * mail) + (<span class="n">1</span> * audits)<span class="k">;</span> <span class="c">// payments are among audits.</span></div><div class="ln" style="top:758px"></div><div class="ln" style="top:779px">            <span class="pi">app_view_model</span>.<span class="p">application_data</span>.<span class="p">user</span>().<span class="p">portal</span>(enable)<span class="k">;</span></div><div class="ln" style="top:800px">            <span class="k">if</span> (enable) {</div><div class="ln" style="top:821px">                <span class="pi">app_view_model</span>.<span class="p">application_data</span>.<span class="p">user</span>().<span class="p">portalAlerts</span>(total)<span class="k">;</span></div><div class="ln" style="top:842px">                <span class="pi">app_view_model</span>.<span class="p">application_data</span>.<span class="p">user</span>().<span class="p">portalAudits</span>(audits)<span class="k">;</span></div><div class="ln" style="top:863px">                <span class="pi">app_view_model</span>.<span class="p">application_data</span>.<span class="p">user</span>().<span class="p">portalMail</span>(mail)<span class="k">;</span></div><div class="ln" style="top:884px">                <span class="pi">app_view_model</span>.<span class="p">application_data</span>.<span class="p">user</span>().<span class="p">portalChats</span>(chats)<span class="k">;</span></div><div class="ln" style="top:905px">                <span class="pi">app_view_model</span>.<span class="p">application_data</span>.<span class="p">user</span>().<span class="p">portalPayments</span>(payments)<span class="k">;</span></div><div class="ln" style="top:926px">            }</div><div class="ln" style="top:947px">        }</div><div class="ln" style="top:968px">    )<span class="k">;</span></div>
<div class="mk" style="top:109px;height:2px;background:#c9991f"></div><div class="mk" style="top:147px;height:2px;background:#c9991f"></div><div class="mk" style="top:150px;height:2px;background:#b5302f"></div><div class="mk" style="top:178px;height:2px;background:#c9991f"></div><div class="mk" style="top:181px;height:2px;background:#8a8066"></div><div class="mk" style="top:199px;height:2px;background:#8a8066"></div><div class="mk" style="top:204px;height:4px;background:#8a8066"></div><div class="mk" style="top:226px;height:2px;background:#8a8066"></div><div class="mk" style="top:249px;height:2px;background:#8a8066"></div><div class="mk" style="top:262px;height:9px;background:#8a8066"></div><div class="mk" style="top:298px;height:2px;background:#8a8066"></div><div class="mk" style="top:317px;height:2px;background:#c9991f"></div><div class="mk" style="top:331px;height:2px;background:#8a8066"></div><div class="mk" style="top:336px;height:2px;background:#b5302f"></div><div class="mk" style="top:355px;height:2px;background:#c9991f"></div><div class="mk" style="top:366px;height:7px;background:#8a8066"></div><div class="mk" style="top:382px;height:2px;background:#c9991f"></div><div class="mk" style="top:386px;height:2px;background:#b5302f"></div><div class="mk" style="top:397px;height:8px;background:#c9991f"></div><div class="mk" style="top:412px;height:2px;background:#8a8066"></div><div class="mk" style="top:441px;height:2px;background:#8a8066"></div><div class="mk" style="top:495px;height:2px;background:#c9991f"></div><div class="mk" style="top:510px;height:2px;background:#c9991f"></div><div class="mk" style="top:521px;height:9px;background:#c9991f"></div><div class="mk" style="top:532px;height:2px;background:#c9991f"></div><div class="mk" style="top:540px;height:4px;background:#c9991f"></div><div class="mk" style="top:548px;height:4px;background:#c9991f"></div><div class="mk" style="top:555px;height:8px;background:#c9991f"></div><div class="mk" style="top:567px;height:2px;background:#c9991f"></div><div class="mk" style="top:571px;height:2px;background:#c9991f"></div><div class="mk" style="top:573px;height:2px;background:#8a8066"></div><div class="mk" style="top:585px;height:3px;background:#c9991f"></div><div class="mk" style="top:590px;height:2px;background:#b5302f"></div><div class="mk" style="top:593px;height:4px;background:#c9991f"></div><div class="mk" style="top:607px;height:2px;background:#c9991f"></div><div class="mk" style="top:611px;height:2px;background:#c9991f"></div><div class="mk" style="top:614px;height:2px;background:#c9991f"></div><div class="mk" style="top:635px;height:2px;background:#c9991f"></div><div class="mk" style="top:640px;height:2px;background:#c9991f"></div><div class="mk" style="top:655px;height:2px;background:#c9991f"></div><div class="mk" style="top:673px;height:2px;background:#c9991f"></div><div class="mk" style="top:679px;height:2px;background:#c9991f"></div><div class="mk" style="top:683px;height:2px;background:#c9991f"></div><div class="mk" style="top:686px;height:2px;background:#c9991f"></div><div class="mk" style="top:690px;height:2px;background:#c9991f"></div><div class="mk" style="top:693px;height:4px;background:#c9991f"></div><div class="mk" style="top:698px;height:4px;background:#c9991f"></div><div class="mk" style="top:705px;height:2px;background:#c9991f"></div><div class="mk" style="top:709px;height:2px;background:#c9991f"></div><div class="mk" style="top:714px;height:2px;background:#c9991f"></div><div class="mk" style="top:717px;height:4px;background:#c9991f"></div><div class="mk" style="top:724px;height:2px;background:#c9991f"></div><div class="mk" style="top:728px;height:2px;background:#8a8066"></div><div class="mk" style="top:741px;height:2px;background:#b5302f"></div><div class="mk" style="top:743px;height:2px;background:#8a8066"></div><div class="mk" style="top:793px;height:2px;background:#b5302f"></div><div class="mk" style="top:814px;height:2px;background:#8a8066"></div><div class="mk" style="top:847px;height:2px;background:#c9991f"></div><div class="mk" style="top:869px;height:2px;background:#c9991f"></div><div class="mk" style="top:874px;height:2px;background:#8a8066"></div><div class="mk" style="top:905px;height:4px;background:#c9991f"></div><div class="mk" style="top:928px;height:3px;background:#c9991f"></div><div class="mk" style="top:936px;height:4px;background:#c9991f"></div><div class="mk" style="top:950px;height:4px;background:#c9991f"></div><div class="mk" style="top:955px;height:2px;background:#c9991f"></div>
<div class="a" style="left:349px;top:965px;width:792px;height:8px;background:#4b4b4b"></div>
<div class="a" style="left:1890px;top:221px;width:8px;height:70px;background:rgba(255,255,255,0.2)"></div>
</div></div>
<div class="a" style="left:279px;top:974px;width:1620px;height:23px;background:#313335"></div><div class="a" style="left:279px;top:974px;width:1620px;height:1px;background:#393b3d"></div>
<div class="a" style="left:0;top:997px;width:1920px;height:1px;background:#323232"></div>
<div class="a" style="left:0;top:1019px;width:1920px;height:1px;background:#4a4d4f"></div>
<div class="tx" style="left:36px;top:6.59px;font-size:12px;color:#bbbbbb;font-weight:normal;letter-spacing:-0.584px;">File</div><div class="tx" style="left:66px;top:6.59px;font-size:12px;color:#bbbbbb;font-weight:normal;letter-spacing:0.081px;">Edit</div><div class="tx" style="left:99px;top:6.59px;font-size:12px;color:#bbbbbb;font-weight:normal;letter-spacing:0.052px;">View</div><div class="tx" style="left:136px;top:6.59px;font-size:12px;color:#bbbbbb;font-weight:normal;letter-spacing:0.080px;">Navigate</div><div class="tx" style="left:195px;top:6.59px;font-size:12px;color:#bbbbbb;font-weight:normal;letter-spacing:0.078px;">Code</div><div class="tx" style="left:236px;top:6.59px;font-size:12px;color:#bbbbbb;font-weight:normal;letter-spacing:-0.044px;">Refactor</div><div class="tx" style="left:293px;top:6.59px;font-size:12px;color:#bbbbbb;font-weight:normal;letter-spacing:-0.005px;">Run</div><div class="tx" style="left:326px;top:6.59px;font-size:12px;color:#bbbbbb;font-weight:normal;letter-spacing:0.197px;">Tools</div><div class="tx" style="left:367px;top:6.59px;font-size:12px;color:#bbbbbb;font-weight:normal;letter-spacing:-0.891px;">VCS</div><div class="tx" style="left:400px;top:6.59px;font-size:12px;color:#bbbbbb;font-weight:normal;letter-spacing:0.387px;">Window</div><div class="tx" style="left:457px;top:6.59px;font-size:12px;color:#bbbbbb;font-weight:normal;letter-spacing:0.330px;">Help</div><div class="tx" style="left:510px;top:7.34px;font-size:12px;color:#a9a9a9;font-weight:normal;letter-spacing:0.117px;">epd - main.php - PhpStorm</div><div class="tx" style="left:12px;top:36.34px;font-size:12px;color:#bbbbbb;font-weight:bold;letter-spacing:-0.111px;">epd</div><div class="tx" style="left:49px;top:36.34px;font-size:12px;color:#bbbbbb;font-weight:normal;letter-spacing:0.108px;">interface</div><div class="tx" style="left:111px;top:36.34px;font-size:12px;color:#bbbbbb;font-weight:normal;letter-spacing:0.498px;">main</div><div class="tx" style="left:154px;top:36.34px;font-size:12px;color:#bbbbbb;font-weight:normal;letter-spacing:0.080px;">tabs</div><div class="tx" style="left:208px;top:36.34px;font-size:12px;color:#bbbbbb;font-weight:normal;letter-spacing:0.329px;">main.php</div><div class="tx" style="left:1609px;top:36.09px;font-size:12px;color:#bbbbbb;font-weight:normal;letter-spacing:0.097px;">Add Configuration...</div><div class="tx" style="left:50px;top:63.84px;font-size:12px;color:#bbbbbb;font-weight:normal;letter-spacing:0.093px;">Project</div><div class="tx" style="left:307px;top:63.64px;font-size:12px;color:#bbbbbb;font-weight:normal;letter-spacing:0.267px;">main.php</div><div class="tx" style="left:49px;top:1002.19px;font-size:11px;color:#bbbbbb;font-weight:normal;letter-spacing:0.099px;">6: TODO</div><div class="tx" style="left:131px;top:1002.19px;font-size:11px;color:#bbbbbb;font-weight:normal;letter-spacing:0.429px;">Terminal</div><div class="tx" style="left:1839px;top:1002.19px;font-size:11px;color:#bbbbbb;font-weight:normal;letter-spacing:0.051px;">Event Log</div><div class="tx" style="left:27px;top:1021.84px;font-size:12px;color:#bbbbbb;font-weight:normal;letter-spacing:0.060px;">Dockerfile detection: You may setup Docker deployment run configuration for 13 files, including the following: </div><div class="tx" style="left:613.5px;top:1021.84px;font-size:12px;color:#bbbbbb;font-weight:normal;letter-spacing:0.253px;">contrib\util\docker\dockers\dev-php-fpm-5-6-redis\Dockerfile </div><div class="tx" style="left:950.4px;top:1021.84px;font-size:12px;color:#bbbbbb;font-weight:normal;letter-spacing:0.281px;">contrib\util\docker\dockers\dev-php-fpm-7-1\Dockerfile </div><div class="tx" style="left:1257.3px;top:1021.84px;font-size:12px;color:#bbbbbb;font-weight:normal;letter-spacing:0.235px;">contrib\util\docker\dockers\dev-php-fpm-7-3-redis\Docke... </div><div class="tx" style="left:1583.3px;top:1021.84px;font-size:12px;color:#bbbbbb;font-weight:normal;letter-spacing:-0.025px;">(2 minutes ago)</div><div class="tx" style="left:1676px;top:1021.84px;font-size:12px;color:#bbbbbb;font-weight:normal;letter-spacing:-0.394px;">1:1</div><div class="tx" style="left:1703px;top:1021.84px;font-size:12px;color:#bbbbbb;font-weight:normal;letter-spacing:-0.752px;">LF</div><div class="tx" style="left:1727px;top:1021.84px;font-size:12px;color:#bbbbbb;font-weight:normal;letter-spacing:-0.499px;">UTF-8</div><div class="tx" style="left:1770px;top:1021.84px;font-size:12px;color:#bbbbbb;font-weight:normal;letter-spacing:0.080px;">EditorConfig</div>
<div class="tx" style="left:3.5px;top:114px;font-size:11px;color:#d8d8d8;letter-spacing:-0.147px;transform:rotate(-90deg);transform-origin:0 0">1: Project</div><div class="tx" style="left:3.5px;top:212px;font-size:11px;color:#bbbbbb;letter-spacing:0.053px;transform:rotate(-90deg);transform-origin:0 0">7: Structure</div><div class="tx" style="left:3.5px;top:968.5px;font-size:11px;color:#bbbbbb;letter-spacing:-0.164px;transform:rotate(-90deg);transform-origin:0 0">2: Favorites</div><div class="tx" style="left:1917px;top:85px;font-size:11px;color:#bbbbbb;letter-spacing:0.051px;transform:rotate(90deg);transform-origin:0 0">Database</div>
<div class="a" style="left:17px;top:106px;width:1px;height:7px;background:#d8d8d8"></div><div class="a" style="left:17px;top:204px;width:1px;height:7px;background:#bbbbbb"></div><div class="a" style="left:17px;top:961px;width:1px;height:7px;background:#bbbbbb"></div><div class="a" style="left:49px;top:1016px;width:7px;height:1px;background:#bbbbbb"></div><div class="a" style="left:35px;top:21px;width:7px;height:1px;background:#bbbbbb"></div><div class="a" style="left:66px;top:21px;width:7px;height:1px;background:#bbbbbb"></div><div class="a" style="left:99px;top:21px;width:7px;height:1px;background:#bbbbbb"></div><div class="a" style="left:136px;top:21px;width:9px;height:1px;background:#bbbbbb"></div><div class="a" style="left:195px;top:21px;width:9px;height:1px;background:#bbbbbb"></div><div class="a" style="left:236px;top:21px;width:8px;height:1px;background:#bbbbbb"></div><div class="a" style="left:299px;top:21px;width:7px;height:1px;background:#bbbbbb"></div><div class="a" style="left:326px;top:21px;width:7px;height:1px;background:#bbbbbb"></div><div class="a" style="left:367px;top:21px;width:7px;height:1px;background:#bbbbbb"></div><div class="a" style="left:400px;top:21px;width:12px;height:1px;background:#bbbbbb"></div><div class="a" style="left:457px;top:21px;width:7px;height:1px;background:#bbbbbb"></div>
<svg class="ic" style="left:7px;top:6px" width="16" height="16" viewBox="0 0 16 16"><rect x="0.5" y="0.5" width="15" height="15" fill="#000" stroke="#b14ff0"/><text x="2.4" y="9.6" font-family="Liberation Sans" font-weight="bold" font-size="8" fill="#fff" textLength="11" lengthAdjust="spacingAndGlyphs">PS</text><rect x="3.5" y="11.6" width="5.2" height="1.4" fill="#fff"/></svg>
<svg class="ic" style="left:888px;top:0px" width="13" height="20" viewBox="0 0 13 20"><path d="M0.5 0.5v16l4-3.8 2.6 6 2.4-1-2.6-5.9h4.8z" fill="#fff" stroke="#000" stroke-width="1"/></svg>
<div class="a" style="left:1797px;top:14px;width:11px;height:1px;background:#bbbbbb"></div>
<svg class="ic" style="left:1844px;top:9px" width="12" height="11" viewBox="0 0 12 11"><path d="M0.5 2.5h8v8h-8z M2.5 2.5v-2h9v8h-3" fill="none" stroke="#bbbbbb"/></svg>
<svg class="ic" style="left:1892px;top:9px" width="11" height="11" viewBox="0 0 11 11"><path d="M0.3 0.3l10.4 10.4M10.7 0.3L0.3 10.7" stroke="#bbbbbb" stroke-width="1.1"/></svg>
<!-- breadcrumb chevrons -->
<svg class="ic" style="left:36px;top:36px" width="6" height="16" viewBox="0 0 6 16"><path d="M0.5 0.5l4 7.5-4 7.5" fill="none" stroke="#5f6366"/></svg>
<svg class="ic" style="left:99px;top:36px" width="6" height="16" viewBox="0 0 6 16"><path d="M0.5 0.5l4 7.5-4 7.5" fill="none" stroke="#5f6366"/></svg>
<svg class="ic" style="left:143px;top:36px" width="6" height="16" viewBox="0 0 6 16"><path d="M0.5 0.5l4 7.5-4 7.5" fill="none" stroke="#5f6366"/></svg>
<svg class="ic" style="left:181px;top:36px" width="6" height="16" viewBox="0 0 6 16"><path d="M0.5 0.5l4 7.5-4 7.5" fill="none" stroke="#5f6366"/></svg>
<!-- toolbar -->
<div class="a" style="left:1602px;top:32px;width:123px;height:22px;border:1px solid #5e6060;border-radius:3px"></div>
<svg class="ic" style="left:1738px;top:37px" width="12" height="13" viewBox="0 0 12 13"><path d="M0.5 0v12.5L11 6.25z" fill="#5f6163"/></svg>
<svg class="ic" style="left:1763px;top:36px" width="12" height="14" viewBox="0 0 12 14"><path d="M3.2 0.3l2 2.6M8.8 0.3l-2 2.6" stroke="#5f6163" stroke-width="1.2"/><ellipse cx="6" cy="8.3" rx="3.6" ry="5.6" fill="#5f6163"/><path d="M0 5.3h12M0 8.5h12M0 11.7h12" stroke="#5f6163" stroke-width="1.3"/><path d="M4 6.9h4M4 9.9h4" stroke="#3c3f41" stroke-width="1.1"/></svg>
<svg class="ic" style="left:1788px;top:37px" width="16" height="14" viewBox="0 0 16 14"><path d="M0 0.5h10v2.5H7v7.5L5.8 12C2 10.5 0 8 0 5z" fill="#5f6163"/><path d="M8 5.4v8.6l7-4.3z" fill="#5f6163"/></svg>
<svg class="ic" style="left:1813px;top:35px" width="16" height="17" viewBox="0 0 16 17"><circle cx="4.5" cy="4" r="2.8" fill="none" stroke="#d2524f" stroke-width="1.3"/><path d="M3 5.5l3-3" stroke="#d2524f" stroke-width="1.2"/><ellipse cx="4.5" cy="12" rx="2.6" ry="3.9" fill="#4fa54f"/><path d="M0.5 10.2h8M0.5 12.8h8M0.8 15.3h7.4M2.6 8.2l1 1M6.4 8.2l-1 1" stroke="#4fa54f" stroke-width="1.1"/><path d="M3.3 11.5h2.4M3.3 13.9h2.4" stroke="#3c3f41" stroke-width="0.8"/><path d="M10 1h3l1.2 1.3v11.4L13 15h-3v-1.6h1.8V2.6H10z" fill="#cfcfcf"/></svg>
<div class="a" style="left:1842px;top:38px;width:10px;height:10px;background:#5f6163"></div>
<div class="a" style="left:1863px;top:33px;width:1px;height:20px;background:#505355"></div>
<svg class="ic" style="left:1872px;top:37px" width="16" height="13" viewBox="0 0 16 13"><path d="M0.5 0.5h15v12H0.5z" fill="none" stroke="#bfbfbf"/><rect x="0" y="0" width="16" height="2.5" fill="#bfbfbf"/><path d="M3.5 4v6l5-3z" fill="#3ea34e"/></svg>
<svg class="ic" style="left:1898px;top:36px" width="16" height="16" viewBox="0 0 16 16"><circle cx="6.3" cy="6" r="4.8" fill="none" stroke="#c4c4c4" stroke-width="1.8"/><path d="M9.6 9.4l4.4 4.4" stroke="#c4c4c4" stroke-width="2.2"/></svg>
<!-- project header icons -->
<svg class="ic" style="left:31px;top:65px" width="14" height="13" viewBox="0 0 14 13"><rect x="0" y="0" width="14" height="13" fill="#9aa7b0"/><rect x="1" y="3.5" width="12" height="8.5" fill="#2f3336"/><rect x="2" y="4.5" width="10" height="6.5" fill="#3d8fb3"/></svg>
<svg class="ic" style="left:95px;top:70px" width="10" height="6" viewBox="0 0 10 6"><path d="M0.5 0h9L5 5.5z" fill="#a8a8a8"/></svg>
<svg class="ic" style="left:173px;top:64px" width="14" height="14" viewBox="0 0 14 14"><circle cx="7" cy="7" r="6.2" fill="none" stroke="#b4b4b4" stroke-width="1.5"/><path d="M7 1v4.6M7 8.4V13M1 7h4.6M8.4 7H13" stroke="#b4b4b4" stroke-width="2"/></svg>
<svg class="ic" style="left:200px;top:64px" width="13" height="14" viewBox="0 0 13 14"><path d="M0 6.8h13" stroke="#b4b4b4" stroke-width="1.6"/><path d="M3 1h7L6.5 4.6z M3 13h7L6.5 9.4z" fill="#b4b4b4"/></svg>
<div class="a" style="left:222px;top:61px;width:1px;height:20px;background:#505355"></div>
<svg class="ic" style="left:232px;top:64px" width="14" height="14" viewBox="0 0 14 14"><path d="M5.13 2.36 L5.35 0.40 L8.65 0.40 L8.87 2.36 L10.08 3.06 L11.89 2.28 L13.54 5.13 L11.95 6.30 L11.95 7.70 L13.54 8.87 L11.89 11.72 L10.08 10.94 L8.87 11.64 L8.65 13.60 L5.35 13.60 L5.13 11.64 L3.92 10.94 L2.11 11.72 L0.46 8.87 L2.05 7.70 L2.05 6.30 L0.46 5.13 L2.11 2.28 L3.92 3.06Z" fill="#b4b4b4"/><circle cx="7" cy="7" r="2.1" fill="#3c3f41"/></svg>
<div class="a" style="left:259px;top:70px;width:12px;height:2px;background:#b4b4b4"></div>
<!-- tab close -->
<svg class="ic" style="left:365px;top:68px" width="8" height="8" viewBox="0 0 8 8"><path d="M0.5 0.5l7 7M7.5 0.5l-7 7" stroke="#6e7072" stroke-width="1"/></svg>
<!-- stripe icons -->
<svg class="ic" style="left:6px;top:120px" width="11" height="9" viewBox="0 0 11 9"><path d="M0 0h4.6l1.3 1.8H11V9H0z" fill="#bdbdbd"/></svg>
<svg class="ic" style="left:7px;top:217px" width="10" height="10" viewBox="0 0 10 10"><rect x="0" y="5.5" width="4" height="4" fill="#a8a8a8"/><rect x="5.5" y="5.5" width="4" height="4" fill="#a8a8a8"/><rect x="5.5" y="0" width="4" height="4" fill="#a8a8a8"/></svg>
<svg class="ic" style="left:5px;top:972px" width="13" height="13" viewBox="0 0 13 13"><path d="M6.5 0.3l1.9 4.1 4.4 0.4-3.3 3 1 4.4-4-2.3-4 2.3 1-4.4-3.3-3 4.4-0.4z" fill="#a8a8a8"/></svg>
<svg class="ic" style="left:1905px;top:68px" width="11" height="13" viewBox="0 0 11 13"><ellipse cx="5.5" cy="1.8" rx="5.5" ry="1.8" fill="#b4b4b4"/><path d="M0 3v1.5c0 1 2.5 1.8 5.5 1.8S11 5.5 11 4.5V3c0 1-2.5 1.8-5.5 1.8S0 4 0 3z M0 6v1.5c0 1 2.5 1.8 5.5 1.8S11 8.5 11 7.5V6c0 1-2.5 1.8-5.5 1.8S0 7 0 6z M0 9v1.5c0 1 2.5 1.8 5.5 1.8S11 11.5 11 10.5V9c0 1-2.5 1.8-5.5 1.8S0 10 0 9z" fill="#b4b4b4"/></svg>
<!-- bottom stripe icons -->
<svg class="ic" style="left:34px;top:1005px" width="10" height="9" viewBox="0 0 10 9"><path d="M0 0.8h1.6M0 4.3h1.6M0 7.8h1.6M3 0.8h7M3 4.3h7M3 7.8h7" stroke="#b4b4b4" stroke-width="1.5"/></svg>
<svg class="ic" style="left:115px;top:1004px" width="11" height="10" viewBox="0 0 11 10"><rect x="0" y="0" width="11" height="10" fill="#b4b4b4"/><path d="M2 2.2l2.2 2-2.2 2M5 7.5h4" stroke="#3c3f41" stroke-width="1.1" fill="none"/></svg>
<svg class="ic" style="left:1821px;top:1003px" width="14" height="14" viewBox="0 0 14 14"><circle cx="6.8" cy="7" r="6.3" fill="#389c4f"/><text x="4.6" y="10.6" font-family="Liberation Sans" font-weight="bold" font-size="9" fill="#e8e8e8">1</text></svg>
<!-- status icons -->
<svg class="ic" style="left:6px;top:1024px" width="13" height="12" viewBox="0 0 13 12"><path d="M3.5 0.5h9v8h-9z" fill="none" stroke="#a8a8a8"/><path d="M0.5 3.5v8h9" fill="none" stroke="#a8a8a8"/></svg>
<svg class="ic" style="left:1849px;top:1024px" width="12" height="13" viewBox="0 0 12 13"><path d="M2.5 6V3.5a2.5 2.5 0 0 1 5 0" fill="none" stroke="#a8a8a8" stroke-width="1.4"/><rect x="0.5" y="6" width="9" height="6.5" fill="#a8a8a8"/></svg>
<svg class="ic" style="left:1870px;top:1022px" width="18" height="16" viewBox="0 0 18 16"><path d="M3 12a3 3 0 0 1 0-6 4.5 4.5 0 0 1 8.6-1.5A3.3 3.3 0 0 1 13 11" fill="#a8a8a8"/><text x="4.3" y="9.5" font-family="Liberation Sans" font-weight="bold" font-size="8" fill="#3c3f41">?</text><circle cx="13.5" cy="12.5" r="3" fill="#a8a8a8"/><circle cx="13.5" cy="12.5" r="1.2" fill="#3c3f41"/></svg>
<svg class="ic" style="left:1894px;top:1023px" width="14" height="15" viewBox="0 0 14 15"><path d="M2.5 4h9l-1.2-3.5h-6.6z" fill="#a8a8a8"/><rect x="0" y="4" width="14" height="1.5" fill="#a8a8a8"/><path d="M3 6.5h8v3a4 4 0 0 1-8 0z" fill="#a8a8a8"/><path d="M1.5 15c0-3 2-4 5.5-4s5.5 1 5.5 4z" fill="#a8a8a8"/><rect x="4.3" y="7.2" width="2" height="1.2" fill="#3c3f41"/><rect x="7.7" y="7.2" width="2" height="1.2" fill="#3c3f41"/></svg>
<!-- browsers -->
<div class="a" style="left:1681px;top:125px;width:160px;height:28px;background:#3c3f41;border-radius:3px"></div>
<svg class="ic" style="left:1688px;top:131px" width="16" height="16" viewBox="0 0 16 16"><path d="M8 8L1.94 4.5A7 7 0 0 1 14.06 4.5z" fill="#db4437"/><path d="M8 8L14.06 4.5A7 7 0 0 1 8 15z" fill="#f4c20d"/><path d="M8 8L8 15A7 7 0 0 1 1.94 4.5z" fill="#0f9d58"/><circle cx="8" cy="8" r="3.4" fill="#f1f1f1"/><circle cx="8" cy="8" r="2.6" fill="#4285f4"/></svg>
<svg class="ic" style="left:1714px;top:131px" width="16" height="16" viewBox="0 0 16 16"><circle cx="8" cy="8.6" r="7" fill="#f2601f"/><path d="M1 8.6a7 7 0 0 0 14 0z" fill="#e8344d" fill-opacity="0.6"/><circle cx="8.6" cy="7.6" r="4" fill="#3e49c6"/><path d="M10.5 0.5c3 1.5 4.5 4.5 4.3 8-0.5-2.5-2-4-4-4.5 0.8-1 0.5-2.5-0.3-3.5z" fill="#ffd54f"/><path d="M4 5.5c1.5-0.3 3.5 0 4.5 1.5-1.5 0-2.5 0.5-2.5 2 0 1.8 2 2.3 3.5 1.5-1 1.5-4 1.8-5.5 0z" fill="#ff9a1f"/></svg>
<svg class="ic" style="left:1740px;top:131px" width="16" height="16" viewBox="0 0 16 16"><circle cx="8" cy="8" r="7.3" fill="#e9e9e9"/><circle cx="8" cy="8" r="6.3" fill="#4a9af0"/><path d="M12.5 3.5L7.2 7.2l1.6 1.6z" fill="#ef4a3f"/><path d="M3.5 12.5l3.7-5.3 1.6 1.6z" fill="#f5f5f5"/></svg>
<svg class="ic" style="left:1766px;top:131px" width="16" height="16" viewBox="0 0 16 16"><ellipse cx="8" cy="8" rx="7" ry="7.3" fill="#e3212b"/><ellipse cx="8" cy="8" rx="3.2" ry="5.6" fill="#3c3f41"/></svg>
<svg class="ic" style="left:1792px;top:131px" width="16" height="16" viewBox="0 0 16 16"><path d="M2.6 9.3c0-3.5 2.3-6 5.6-6s5.3 2.3 5.3 5.8H5.6c0.2 1.7 1.2 2.6 2.8 2.6 1.1 0 1.8-0.4 2.3-1.1h2.8c-0.8 2.3-2.8 3.5-5.2 3.5-3.5 0-5.7-2-5.7-4.8z M5.6 7.6h4.8c-0.2-1.4-1.1-2.2-2.4-2.2s-2.2 0.8-2.4 2.2z" fill="#1ebbee"/><path d="M0.8 14.8C0 13 2.5 7.5 7 4.3c4-2.9 7.6-3.8 8-2.6 0.4 1.1-1.3 3.2-3.8 5.2 1.2-2 1.8-3.4 1.2-3.9-0.9-0.7-4.6 1.5-7.5 4.5-2.8 3-4.2 5.8-3.3 6.7 0.5 0.5 1.6 0.3 3-0.4-2 1.6-3.3 2-3.8 1z" fill="#1ebbee"/></svg>
<svg class="ic" style="left:1818px;top:131px" width="16" height="16" viewBox="0 0 16 16"><circle cx="8" cy="8" r="7" fill="#1273d0"/><path d="M1.2 6.3C2.2 3 4.8 1 8 1c3.9 0 7 3.1 7 7 0 1-0.2 1.6-0.5 2.3-1 1.3-3 1.6-4.5 1.2 1-0.6 1.6-1.6 1.3-2.8C10.8 6.4 8.6 5 6.2 5.2 4 5.4 2.2 6.2 1.2 6.3z" fill="#3fc98c"/><path d="M5 9.5c0-2 1.6-3.2 3.6-3" fill="none" stroke="#0a4d91" stroke-width="1.5"/></svg>
<!-- error icon -->
<svg class="ic" style="left:1887px;top:87px" width="11" height="11" viewBox="0 0 11 11"><circle cx="5.5" cy="5.5" r="5.3" fill="#c13130"/><rect x="4.7" y="2" width="1.6" height="4.5" fill="#2b2b2b"/><rect x="4.7" y="7.6" width="1.6" height="1.5" fill="#2b2b2b"/></svg>

</body></html>
